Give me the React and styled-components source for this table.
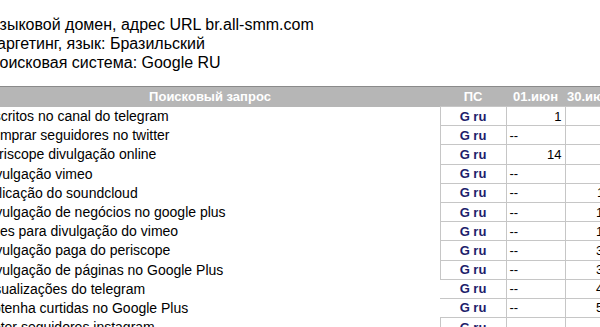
import React from 'react';
import styled, { createGlobalStyle } from 'styled-components';

const Global = createGlobalStyle`
    html, body {
        margin: 0;
        padding: 0;
        background: #fff;
        overflow: hidden;
    }
    body {
        font-family: "Liberation Sans", Arial, sans-serif;
        color: #000;
    }
`;

const Page = styled.div`
    width: 680px;
    margin-left: -20px;
    padding-top: 15px;
`;

const Info = styled.div`
    padding-left: 8px;
    font-size: 16px;
    line-height: 19px;
    margin-bottom: 14px;
`;

const Report = styled.table`
    border-collapse: collapse;
    table-layout: fixed;
    width: 634px;
    font-size: 13px;
`;

const HeadRow = styled.tr`
    background: #b6b6b6;
    border-top: 1px solid #8a8a8a;
`;

const HeadCell = styled.th`
    height: 19px;
    padding: 0;
    color: #fff;
    font-weight: bold;
    text-align: center;
    white-space: nowrap;
    overflow: hidden;
`;

const Query = styled.td`
    height: 19.2px;
    padding: 0 0 0 2px;
    font-size: 14px;
    white-space: nowrap;
`;

const Engine = styled.td`
    padding: 0;
    text-align: center;
    font-weight: bold;
    color: #1d1d6b;
    border: 1px solid #c6c6c6;
    ${p => p.$open && 'border-left-color: transparent;'}
`;

const Pos = styled.td`
    padding: 0 3px;
    text-align: ${p => (p.$value === '--' ? 'left' : 'right')};
    border: 1px solid #c6c6c6;
    white-space: nowrap;
`;

const rows = [
    ['Inscritos no canal do telegram', '1', '2'],
    ['Comprar seguidores no twitter', '--', '3'],
    ['Periscope divulgação online', '14', '2'],
    ['Divulgação vimeo', '--', '5'],
    ['Aplicação do soundcloud', '--', '11'],
    ['Divulgação de negócios no google plus', '--', '12'],
    ['Likes para divulgação do vimeo', '--', '13'],
    ['Divulgação paga do periscope', '--', '31'],
    ['Divulgação de páginas no Google Plus', '--', '35'],
    ['Visualizações do telegram', '--', '42', true],
    ['Obtenha curtidas no Google Plus', '--', '53', true],
    ['Obter seguidores instagram', '--', '6'],
];

export default function App() {
    return (
        <>
            <Global />
            <Page>
                <Info>
                    <div>Языковой домен, адрес URL br.all-smm.com</div>
                    <div>Таргетинг, язык: Бразильский</div>
                    <div>Поисковая система: Google RU</div>
                </Info>
                <Report>
                    <colgroup>
                        <col style={{ width: 460 }} />
                        <col style={{ width: 66 }} />
                        <col style={{ width: 59 }} />
                        <col style={{ width: 49 }} />
                    </colgroup>
                    <thead>
                        <HeadRow>
                            <HeadCell>Поисковый запрос</HeadCell>
                            <HeadCell>ПС</HeadCell>
                            <HeadCell>01.июн</HeadCell>
                            <HeadCell>30.июн</HeadCell>
                        </HeadRow>
                    </thead>
                    <tbody>
                        {rows.map((row, index) => (
                            <tr key={index}>
                                <Query>{row[0]}</Query>
                                <Engine $open={row[3]}>G ru</Engine>
                                <Pos $value={row[1]}>{row[1]}</Pos>
                                <Pos $value={row[2]}>{row[2]}</Pos>
                            </tr>
                        ))}
                    </tbody>
                </Report>
            </Page>
        </>
    );
}
